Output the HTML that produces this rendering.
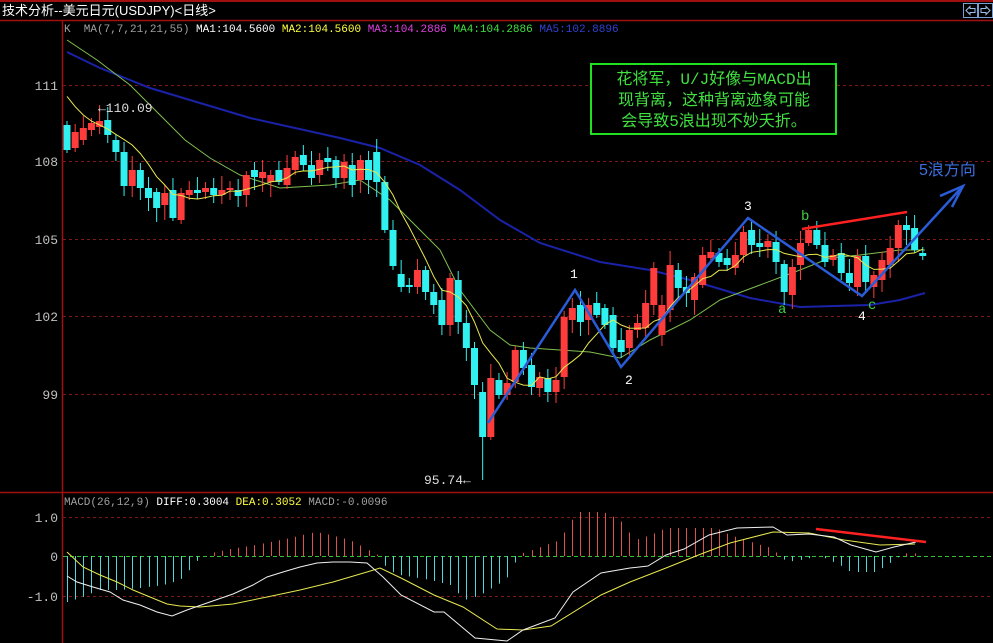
<!DOCTYPE html>
<html><head><meta charset="utf-8">
<style>
html,body{margin:0;padding:0;background:#000;overflow:hidden}
svg{display:block}
text{font-family:"Liberation Mono","Noto Sans CJK SC",monospace}
</style></head><body>
<svg id="s" width="993" height="643" viewBox="0 0 993 643" xmlns="http://www.w3.org/2000/svg">
<rect width="993" height="643" fill="#000"/>
<rect x="0" y="0" width="993" height="2" fill="#a01010"/>
<line x1="0" y1="20.5" x2="993" y2="20.5" stroke="#a01010" stroke-width="1.5"/>
<text x="2" y="15" fill="#fff" font-size="13" style='font-family:"Liberation Sans","Noto Sans CJK SC",sans-serif'>技术分析--美元日元(USDJPY)&lt;日线&gt;</text>
<rect x="963.5" y="3.5" width="14" height="14" fill="none" stroke="#7aa0d0"/>
<rect x="978.5" y="3.5" width="14" height="14" fill="none" stroke="#7aa0d0"/>
<path d="M966 10.5 L970 6.5 L970 8.5 L975 8.5 L975 12.5 L970 12.5 L970 14.5 Z" fill="none" stroke="#9bc0e8"/>
<path d="M990 10.5 L986 6.5 L986 8.5 L981 8.5 L981 12.5 L986 12.5 L986 14.5 Z" fill="none" stroke="#9bc0e8"/>
<line x1="62.5" y1="20" x2="62.5" y2="643" stroke="#a01010" stroke-width="1.5"/>
<line x1="0" y1="492.5" x2="993" y2="492.5" stroke="#a01010" stroke-width="1.5"/>
<g fill="#c0c0c0" font-size="13" text-anchor="end">
<text x="58" y="90">111</text><text x="58" y="166">108</text><text x="58" y="244">105</text><text x="58" y="321">102</text><text x="58" y="399">99</text>
<text x="58" y="522">1.0</text><text x="58" y="561">0</text><text x="58" y="601">-1.0</text>
</g>
<g stroke="#801818" stroke-dasharray="3,3" stroke-width="1">
<line x1="63" y1="85.5" x2="993" y2="85.5"/><line x1="63" y1="161.5" x2="993" y2="161.5"/><line x1="63" y1="239.5" x2="993" y2="239.5"/><line x1="63" y1="316.5" x2="993" y2="316.5"/><line x1="63" y1="394.5" x2="993" y2="394.5"/>
<line x1="63" y1="517.5" x2="993" y2="517.5"/><line x1="63" y1="596.5" x2="993" y2="596.5"/>
</g>
<line x1="63" y1="556.5" x2="993" y2="556.5" stroke="#30c030" stroke-dasharray="4,3"/>
<text x="64" y="32" font-size="11" xml:space="preserve"><tspan fill="#a0a0a0">K  MA(7,7,21,21,55) </tspan><tspan fill="#fff">MA1:104.5600 </tspan><tspan fill="#ffff40">MA2:104.5600 </tspan><tspan fill="#e040e0">MA3:104.2886 </tspan><tspan fill="#40e040">MA4:104.2886 </tspan><tspan fill="#3040d0">MA5:102.8896</tspan></text>
<text x="64" y="505" font-size="11" xml:space="preserve"><tspan fill="#a0a0a0">MACD(26,12,9) </tspan><tspan fill="#fff">DIFF:0.3004 </tspan><tspan fill="#ffff40">DEA:0.3052 </tspan><tspan fill="#a0a0a0">MACD:-0.0096</tspan></text>
<g id="hist"></g>
<polyline fill="none" stroke="#1a22a8" stroke-width="2" points="67,52 100,68 150,88 250,118 340,138 380,148 420,165 460,190 500,220 540,243 600,262 650,270 690,280 750,298 800,307 870,305 900,300 925,293"/>
<polyline fill="none" stroke="#80c050" stroke-width="1" points="67,40 97,60 130,85 160,115 185,140 210,158 240,175 280,188 330,185 360,180 390,200 420,230 440,250 460,290 490,330 510,345 530,348 560,350 590,352 620,358 650,340 690,320 720,300 760,285 800,270 830,258 860,255 900,250 925,250"/>
<g id="cand"></g>
<polyline id="ma7" fill="none" stroke="#e8e850" stroke-width="1"/>
<polyline fill="none" stroke="#2a5cd8" stroke-width="2.5" points="488,423 575,290 621,367 748,218 862,296 963,186"/>
<polyline fill="none" stroke="#2a5cd8" stroke-width="2.5" points="940,196 963,186 952,207"/>
<line x1="802" y1="229" x2="907" y2="212" stroke="#ff2020" stroke-width="2.5"/>
<g font-size="13" fill="#fff"><text x="570" y="278">1</text><text x="625" y="384">2</text><text x="744" y="210">3</text><text x="858" y="320">4</text></g>
<g font-size="14" fill="#40d040"><text x="778" y="313">a</text><text x="801" y="220">b</text><text x="868" y="309">c</text></g>
<text x="919" y="175" font-size="16" fill="#3c70e0" style='font-family:"Liberation Sans","Noto Sans CJK SC",sans-serif'>5浪方向</text>
<text x="98" y="112" font-size="13" fill="#ddd">←110.09</text>
<text x="424" y="484" font-size="13" fill="#ddd">95.74←</text>
<rect x="591" y="64" width="245" height="70" fill="#000" stroke="#20e020" stroke-width="2"/>
<g font-size="16" fill="#40e040" text-anchor="middle" style='font-family:"Liberation Mono","Noto Sans CJK SC",monospace'>
<text x="714" y="84">花将军，U/J好像与MACD出</text><text x="714" y="105">现背离，这种背离迹象可能</text><text x="714" y="126">会导致5浪出现不妙夭折。</text></g>
<polyline fill="none" stroke="#e8e850" stroke-width="1" points="67,552 83,567 100,575 117,582 133,590 150,597 167,604 180,606 200,607 233,604 267,597 300,590 333,582 367,572 380,568 401,578 434,595 463,607 497,629 523,630 551,626 601,595 630,582 666,568 701,554 730,543 773,532 809,533 844,540 880,545 915,544"/>
<polyline fill="none" stroke="#f0f0f0" stroke-width="1" points="67,576 77,582 93,587 110,592 123,600 140,605 157,612 172,616 187,610 207,603 233,594 253,585 267,577 283,572 300,567 317,563 333,562 350,562 367,563 383,577 401,595 434,612 444,612 475,638 507,641 523,630 555,618 573,592 601,573 630,568 648,566 666,555 684,549 709,535 737,528 773,527 787,535 809,534 834,537 851,545 876,552 894,547 916,542"/>
<line x1="816" y1="529" x2="926" y2="542" stroke="#ff2020" stroke-width="2.5"/>
</svg>
<script>
var NS="http://www.w3.org/2000/svg";
var D=[[125,150],[148,132],[140,128],[130,123],[127,121],[120,135],[140,152],[152,186],[186,170],[170,188],[188,198],[192,208],[205,193],[190,218],[220,193],[195,190],[190,193],[192,188],[188,195],[195,190],[190,188],[190,196],[195,175],[170,177],[178,172],[182,175],[170,182],[185,168],[170,157],[155,165],[165,178],[175,160],[158,162],[160,178],[178,162],[165,185],[180,160],[160,180],[152,182],[182,230],[230,266],[274,287],[285,287],[287,270],[270,292],[292,305],[300,325],[325,278],[280,322],[323,348],[348,385],[392,437],[437,378],[380,395],[395,383],[382,350],[350,368],[365,387],[388,377],[378,392],[392,380],[377,317],[320,308],[305,322],[320,305],[303,315],[308,325],[315,348],[340,352],[348,330],[330,323],[328,303],[305,268],[335,305],[310,265],[270,288],[287,293],[300,277],[285,255],[258,252],[253,262],[258,265],[268,255],[255,232],[230,245],[243,247],[247,241],[242,262],[264,292],[295,267],[265,243],[243,230],[230,245],[245,262],[260,255],[253,273],[273,283],[287,256],[256,282],[287,275],[280,260],[265,248],[248,225],[225,230],[228,250],[253,256]];
var g=document.getElementById("cand"),step=8.15;
function X(i){return 67+i*step;}
for(var i=0;i<D.length;i++){
 var o=D[i][0],c=D[i][1],tp=Math.min(o,c),bt=Math.max(o,c);
 var up=o>c,col=up?"#ff3c3c":"#30f0f0";
 var hh=tp-(4+((i*37)%11)),ll=bt+(3+((i*53)%13));
 if(i==4)hh=105; if(i==51)ll=480;
 var x=X(i);
 var w=document.createElementNS(NS,"line");
 w.setAttribute("x1",x);w.setAttribute("x2",x);w.setAttribute("y1",hh);w.setAttribute("y2",ll);w.setAttribute("stroke",col);g.appendChild(w);
 var r=document.createElementNS(NS,"rect");
 r.setAttribute("x",x-3.5);r.setAttribute("y",tp);r.setAttribute("width",7);r.setAttribute("height",Math.max(1,bt-tp));r.setAttribute("fill",col);g.appendChild(r);
}
var pad=[60,70,80,95,105,115],cl=pad.concat(D.map(function(d){return d[1];})),pts=[];
for(var i=0;i<D.length;i++){var s=0;for(var k=0;k<7;k++)s+=cl[i+6-k];pts.push(X(i).toFixed(1)+","+(s/7).toFixed(1));}
document.getElementById("ma7").setAttribute("points",pts.join(" "));
var K=[[67,602],[83,597],[99,590],[120,590],[140,588],[163,585],[180,580],[187,573],[195,563],[203,556],[211,553],[230,549],[250,546],[270,542],[290,538],[315,532],[330,535],[350,540],[365,548],[373,553],[380,556],[387,570],[400,575],[430,580],[450,585],[465,600],[480,595],[500,583],[510,575],[518,556],[523,553],[540,547],[560,540],[570,522],[580,512],[603,512],[620,520],[635,540],[650,535],[666,528],[716,528],[730,535],[760,545],[771,548],[780,556],[787,562],[800,560],[820,556],[840,565],[851,572],[876,572],[890,563],[900,556],[910,552],[923,556]];
function iv(x){for(var j=0;j<K.length-1;j++){if(x>=K[j][0]&&x<=K[j+1][0]){var t=(x-K[j][0])/(K[j+1][0]-K[j][0]);return K[j][1]+t*(K[j+1][1]-K[j][1]);}}return 556;}
var hg=document.getElementById("hist");
for(var i=0;i<D.length;i++){var x=Math.round(X(i))+0.5,v=iv(X(i));if(Math.abs(v-556)<1)continue;
 var ln=document.createElementNS(NS,"line");ln.setAttribute("x1",x);ln.setAttribute("x2",x);ln.setAttribute("y1",556);ln.setAttribute("y2",v);ln.setAttribute("stroke",v<556?"#e05050":"#50d8d8");hg.appendChild(ln);}
</script>
</body></html>
